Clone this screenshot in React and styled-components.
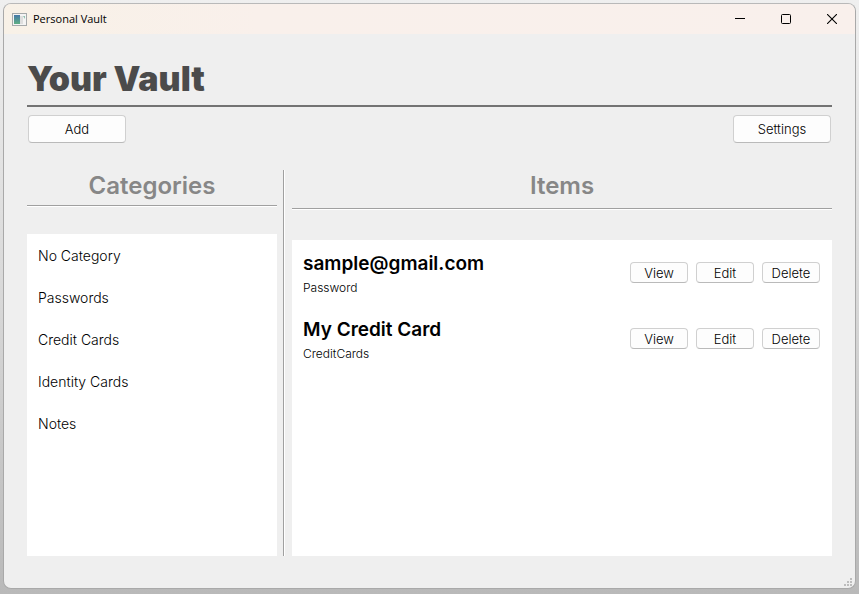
import React from "react";
import styled, { createGlobalStyle } from "styled-components";

const GlobalStyle = createGlobalStyle`
  *, *::before, *::after { box-sizing: border-box; }
  body {
    margin: 0;
    background: linear-gradient(180deg, #efefef 0%, #d8d8d8 50%, #b9b9b9 100%);
    background-attachment: fixed;
    font-family: "Century Gothic", Inter, sans-serif;
    font-weight: 300;
    color: #000;
  }
  h1, h2, h3, p, ul { margin: 0; padding: 0; }
  ul { list-style: none; }
  button { font: inherit; color: inherit; }
`;

const Desktop = styled.div`
  display: flex;
  min-height: 100vh;
  padding: 3px 3px 5px;
`;

const Window = styled.main`
  position: relative;
  flex: 1;
  min-width: 0;
  display: flex;
  flex-direction: column;
  overflow: hidden;
  background: #efefef;
  border: 1px solid #a9a9a9;
  border-top-color: #b9b9b9;
  border-radius: 8px;
`;

const TitleBar = styled.header`
  display: flex;
  align-items: center;
  height: 30px;
  padding-left: 8px;
  background: linear-gradient(90deg, #f8f1e7 0%, #f9f0eb 30%, #f9f0ec 100%);
`;

const AppIcon = styled.svg`
  width: 15px;
  height: 13px;
  margin-right: 6px;
  flex: none;
`;

const WindowTitle = styled.span`
  flex: 1;
  font: 400 11px/16px "Open Sans", sans-serif;
`;

const CaptionButton = styled.button`
  display: grid;
  place-items: center;
  width: 46px;
  height: 30px;
  padding: 0;
  border: 0;
  background: transparent;

  svg { display: block; }
`;

const Body = styled.div`
  flex: 1;
  display: flex;
  flex-direction: column;
  padding: 20px 23px 32px;
`;

const PageTitle = styled.h1`
  padding-top: 1px;
  padding-bottom: 2px;
  border-bottom: 2px solid #737373;
  color: #4b4b4b;
  font: 900 34px/48px Inter, sans-serif;
`;

const Toolbar = styled.div`
  display: flex;
  justify-content: space-between;
  padding: 8px 1px 0;
`;

const Button = styled.button`
  width: ${({ $small }) => ($small ? 58 : 98)}px;
  height: ${({ $small }) => ($small ? 21 : 28)}px;
  padding: 0;
  border: 1px solid #d0d0d0;
  border-bottom-color: #bababa;
  border-radius: 4px;
  background: #fdfdfd;
  font-size: 13px;
  line-height: 18px;
`;

const Columns = styled.div`
  flex: 1;
  display: flex;
  margin-top: 27px;
`;

const Column = styled.section`
  display: flex;
  flex-direction: column;
  flex: ${({ $wide }) => ($wide ? "1 1 0" : "0 0 250px")};
  min-width: 0;
`;

const ColumnTitle = styled.h2`
  height: ${({ $tall }) => ($tall ? 40 : 37)}px;
  border-bottom: 1px solid #fff;
  box-shadow: inset 0 -1px #a0a0a0;
  color: #878787;
  text-align: center;
  font-size: 24px;
  line-height: 32px;
  font-weight: 600;
`;

const Divider = styled.div`
  width: 2px;
  margin: 0 7px 0 6px;
  border-left: 1px solid #a0a0a0;
  background: #fff;
`;

const Panel = styled.ul`
  flex: 1;
  margin-top: ${({ $gap }) => $gap}px;
  background: #fff;
`;

const Category = styled.li`
  height: 42px;
  padding: 1px 11px 0;
  font-size: 14px;
  line-height: 42px;
`;

const Item = styled.li`
  display: flex;
  align-items: center;
  gap: 8px;
  height: 66px;
  padding: 0 12px 1px 11px;
`;

const ItemText = styled.div`
  flex: 1;
  min-width: 0;
  padding-top: 3px;
`;

const ItemName = styled.h3`
  font-size: 19px;
  line-height: 28px;
  font-weight: 600;
`;

const ItemKind = styled.p`
  font-size: 12px;
  line-height: 20px;
`;

const Grip = styled.svg`
  position: absolute;
  right: 3px;
  bottom: 2px;
`;

const categories = ["No Category", "Passwords", "Credit Cards", "Identity Cards", "Notes"];
const items = [
  { name: "sample@gmail.com", kind: "Password" },
  { name: "My Credit Card", kind: "CreditCards" },
];
const gripDots = [[6, 0], [3, 3], [6, 3], [0, 6], [3, 6], [6, 6]];

export default function App() {
  return (
    <>
      <GlobalStyle />
      <Desktop>
        <Window>
          <TitleBar>
            <AppIcon viewBox="0 0 15 13" aria-hidden="true">
              <defs>
                <linearGradient id="pane" x1="0" y1="0" x2="0" y2="1">
                  <stop offset="0" stopColor="#4679a8" />
                  <stop offset="1" stopColor="#5fae83" />
                </linearGradient>
              </defs>
              <rect x="0.5" y="0.5" width="14" height="12" fill="#f4f4f4" stroke="#a5a9aa" />
              <rect x="2" y="2" width="6" height="9" fill="url(#pane)" />
              <rect x="8" y="3" width="3" height="8" fill="#dedede" />
              <path d="M11 3h2v3z" fill="#8dbfae" />
            </AppIcon>
            <WindowTitle>Personal Vault</WindowTitle>
            <CaptionButton aria-label="Minimize">
              <svg width="10" height="10"><path d="M0 4.5h10" stroke="#000" /></svg>
            </CaptionButton>
            <CaptionButton aria-label="Maximize">
              <svg width="10" height="10"><rect x="0.5" y="0.5" width="9" height="9" rx="1" fill="none" stroke="#000" /></svg>
            </CaptionButton>
            <CaptionButton aria-label="Close">
              <svg width="10" height="10"><path d="M0 0l10 10M10 0L0 10" stroke="#000" strokeWidth="1.1" /></svg>
            </CaptionButton>
          </TitleBar>
          <Body>
            <PageTitle>Your Vault</PageTitle>
            <Toolbar>
              <Button>Add</Button>
              <Button>Settings</Button>
            </Toolbar>
            <Columns>
              <Column>
                <ColumnTitle>Categories</ColumnTitle>
                <Panel $gap={27}>
                  {categories.map((name) => <Category key={name}>{name}</Category>)}
                </Panel>
              </Column>
              <Divider />
              <Column $wide>
                <ColumnTitle $tall>Items</ColumnTitle>
                <Panel $gap={30}>
                  {items.map(({ name, kind }) => (
                    <Item key={name}>
                      <ItemText>
                        <ItemName>{name}</ItemName>
                        <ItemKind>{kind}</ItemKind>
                      </ItemText>
                      <Button $small>View</Button>
                      <Button $small>Edit</Button>
                      <Button $small>Delete</Button>
                    </Item>
                  ))}
                </Panel>
              </Column>
            </Columns>
          </Body>
          <Grip width="8" height="8" aria-hidden="true">
            {gripDots.map(([x, y]) => <rect key={`${x}-${y}`} x={x} y={y} width="2" height="2" fill="#bdbdbd" />)}
          </Grip>
        </Window>
      </Desktop>
    </>
  );
}
